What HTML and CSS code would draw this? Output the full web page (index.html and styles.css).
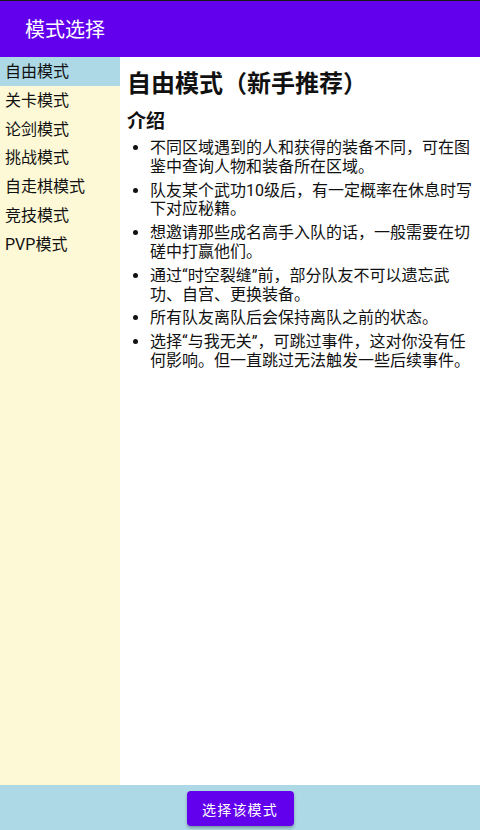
FILE: index.html
```html
<!DOCTYPE html>
<html lang="zh-CN">
<head>
<meta charset="utf-8">
<title>模式选择</title>
<link rel="stylesheet" href="styles.css">
</head>
<body>
<div class="app">
  <header class="topbar">模式选择</header>
  <div class="main">
    <nav class="sidebar">
      <div class="item active">自由模式</div>
      <div class="item">关卡模式</div>
      <div class="item">论剑模式</div>
      <div class="item">挑战模式</div>
      <div class="item">自走棋模式</div>
      <div class="item">竞技模式</div>
      <div class="item">PVP模式</div>
    </nav>
    <section class="content">
      <h1 class="title">自由模式（新手推荐）</h1>
      <h2 class="subtitle">介绍</h2>
      <ul class="list">
        <li>不同区域遇到的人和获得的装备不同，可在图鉴中查询人物和装备所在区域。</li>
        <li>队友某个武功10级后，有一定概率在休息时写下对应秘籍。</li>
        <li>想邀请那些成名高手入队的话，一般需要在切磋中打赢他们。</li>
        <li>通过“时空裂缝”前，部分队友不可以遗忘武功、自宫、更换装备。</li>
        <li>所有队友离队后会保持离队之前的状态。</li>
        <li>选择“与我无关”，可跳过事件，这对你没有任何影响。但一直跳过无法触发一些后续事件。</li>
      </ul>
    </section>
  </div>
  <footer class="footer">
    <button class="btn">选择该模式</button>
  </footer>
</div>
</body>
</html>
```
FILE: styles.css
```css
* { box-sizing: border-box; }
html, body {
  margin: 0;
  padding: 0;
  width: 480px;
  height: 830px;
  overflow: hidden;
  background: #ffffff;
  font-family: Roboto, "Noto Sans CJK SC", sans-serif;
  color: #111;
}
.app {
  display: flex;
  flex-direction: column;
  height: 830px;
}
.topbar {
  flex: 0 0 57px;
  background: #6200ee;
  border-top: 1px solid #1a1a1a;
  color: #ffffff;
  font-size: 20px;
  display: flex;
  align-items: center;
  padding-left: 25px;
  padding-bottom: 1px;
}
.main {
  flex: 1;
  display: flex;
  min-height: 0;
}
.sidebar {
  flex: 0 0 120px;
  background: #fdf9d6;
  display: flex;
  flex-direction: column;
}
.item {
  height: 28.8px;
  line-height: 27.8px;
  padding-top: 1px;
  font-size: 16px;
  padding-left: 5px;
  color: #111;
}
.item.active {
  background: #add8e6;
}
.content {
  flex: 1;
  background: #ffffff;
  padding: 10px 8px 0 7px;
}
.title {
  margin: 0;
  font-size: 24px;
  font-weight: bold;
  line-height: 34px;
}
.subtitle {
  margin: 6px 0 0 0;
  font-size: 19px;
  font-weight: bold;
  line-height: 30px;
}
.list {
  margin: 2px 0 0 0;
  padding-left: 23px;
  font-size: 16px;
  line-height: 18.8px;
}
.list li {
  margin-bottom: 5px;
}
.footer {
  flex: 0 0 45px;
  background: #add8e6;
  display: flex;
  justify-content: center;
  align-items: flex-start;
  padding-top: 6px;
}
.btn {
  background: #6200ee;
  color: #ffffff;
  border: none;
  border-radius: 4px;
  height: 35px;
  width: 107px;
  font-family: Roboto, "Noto Sans CJK SC", sans-serif;
  font-size: 14px;
  letter-spacing: 1.2px;
  box-shadow: 0 2px 3px rgba(0,0,0,0.3);
  padding: 0;
}
```
